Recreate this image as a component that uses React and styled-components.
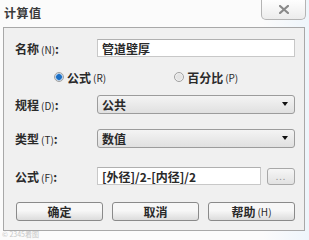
import React from 'react';
import styled, { createGlobalStyle } from 'styled-components';

const Global = createGlobalStyle`
    html, body {
        margin: 0;
        padding: 0;
        background: #fbfbfb;
    }
    body {
        width: 309px;
        height: 240px;
        overflow: hidden;
        font-family: "Noto Sans CJK SC", "DejaVu Sans", sans-serif;
        font-size: 12px;
        color: #1a1a1a;
    }
`;

const Window = styled.div`
    position: relative;
    width: 309px;
    height: 240px;
    background: linear-gradient(to right, #fbfbfb 85%, #eef5fb 100%);
`;

const TitleBar = styled.div`
    display: flex;
    justify-content: space-between;
    align-items: flex-start;
    height: 27px;
    padding-left: 4px;
`;

const Title = styled.div`
    margin-top: 4px;
    font-size: 12px;
    font-weight: 700;
    color: #3a3a3a;
    letter-spacing: 0.5px;
`;

const CloseBtn = styled.div`
    width: 43px;
    height: 20px;
    margin-right: 3px;
    margin-top: -1px;
    border: 1px solid #b4b4b4;
    border-top: none;
    border-radius: 0 0 5px 5px;
    background: linear-gradient(#ffffff, #ececec);
    display: flex;
    align-items: center;
    justify-content: center;
`;

const Panel = styled.div`
    margin-left: 3px;
    width: 302px;
    height: 204px;
    border: 1px solid #a8a8a8;
    background: #f0f0f0;
    box-sizing: border-box;
    padding: 10px 9px 0 11px;
    display: flex;
    flex-direction: column;
`;

const Row = styled.div`
    display: flex;
    align-items: center;
    height: 20px;
    margin-bottom: ${(p) => p.gap || 0}px;
`;

const Label = styled.div`
    width: 82px;
    font-size: 12px;
    font-weight: 700;
    color: #2a2a2a;
    white-space: nowrap;
`;

const Hot = styled.span`
    font-size: 10px;
    font-weight: 400;
    margin-left: 2px;
`;

const TextBox = styled.div`
    flex: 1;
    height: 18px;
    border: 1px solid #c8c8c8;
    border-top-color: #b0b0b0;
    background: #fff;
    box-sizing: border-box;
    padding-left: 4px;
    display: flex;
    align-items: center;
    font-weight: 700;
    color: #2a2a2a;
`;

const Select = styled.div`
    flex: 1;
    height: 19px;
    border: 1px solid #9c9c9c;
    border-radius: 3px;
    background: linear-gradient(#f4f4f4, #e0e0e0);
    box-sizing: border-box;
    padding: 0 6px 0 4px;
    display: flex;
    align-items: center;
    justify-content: space-between;
    font-weight: 700;
    color: #2a2a2a;
`;

const Arrow = styled.span`
    width: 0;
    height: 0;
    border-left: 3.5px solid transparent;
    border-right: 3.5px solid transparent;
    border-top: 4px solid #111;
`;

const RadioRow = styled.div`
    display: flex;
    align-items: center;
    height: 20px;
    margin-bottom: 7px;
`;

const RadioItem = styled.div`
    display: flex;
    align-items: center;
    margin-left: ${(p) => p.left}px;
    font-weight: 700;
    color: #2a2a2a;
`;

const Dot = styled.span`
    width: 10px;
    height: 10px;
    border-radius: 50%;
    border: 1px solid #a0a0a0;
    box-sizing: border-box;
    margin-right: 3px;
    background: ${(p) =>
        p.on
            ? 'radial-gradient(circle, #1c6fc4 0 2.5px, #7fb2e6 3px, #e8e8e8 4px)'
            : 'radial-gradient(circle, #e4e4e4 0 2.5px, #f4f4f4 4px)'};
`;

const SmallBtn = styled.div`
    width: 28px;
    height: 17px;
    margin-left: 6px;
    border: 1px solid #a8a8a8;
    border-radius: 3px;
    background: linear-gradient(#f6f6f6, #e2e2e2);
    box-sizing: border-box;
    display: flex;
    align-items: center;
    justify-content: center;
    font-size: 9px;
    color: #999;
    letter-spacing: 1px;
`;

const Buttons = styled.div`
    display: flex;
    gap: 9px;
    margin-top: 16px;
    padding-left: 1px;
`;

const Button = styled.div`
    width: 88px;
    height: 19px;
    border: 1px solid #8a8a8a;
    border-radius: 3px;
    background: linear-gradient(#f7f7f7 45%, #dcdcdc);
    box-sizing: border-box;
    display: flex;
    align-items: center;
    justify-content: center;
    font-weight: 700;
    color: #2a2a2a;
`;

const Watermark = styled.div`
    position: absolute;
    left: 2px;
    bottom: 1px;
    font-size: 7px;
    color: #c8c8c8;
`;

export default function App() {
    return (
        <Window>
            <Global />
            <TitleBar>
                <Title>计算值</Title>
                <CloseBtn>
                    <svg width="10" height="9" viewBox="0 0 10 9">
                        <path
                            d="M1 1 L9 8 M9 1 L1 8"
                            stroke="#8a8a8a"
                            strokeWidth="2.2"
                            strokeLinecap="square"
                        />
                    </svg>
                </CloseBtn>
            </TitleBar>
            <Panel>
                <Row gap={9}>
                    <Label>
                        名称<Hot>(N)</Hot>:
                    </Label>
                    <TextBox>管道壁厚</TextBox>
                </Row>
                <RadioRow>
                    <RadioItem left={39}>
                        <Dot on />
                        公式<Hot>(R)</Hot>
                    </RadioItem>
                    <RadioItem left={68}>
                        <Dot />
                        百分比<Hot>(P)</Hot>
                    </RadioItem>
                </RadioRow>
                <Row gap={14}>
                    <Label>
                        规程<Hot>(D)</Hot>:
                    </Label>
                    <Select>
                        公共
                        <Arrow />
                    </Select>
                </Row>
                <Row gap={18}>
                    <Label>
                        类型<Hot>(T)</Hot>:
                    </Label>
                    <Select>
                        数值
                        <Arrow />
                    </Select>
                </Row>
                <Row>
                    <Label>
                        公式<Hot>(F)</Hot>:
                    </Label>
                    <TextBox>[外径]/2-[内径]/2</TextBox>
                    <SmallBtn>...</SmallBtn>
                </Row>
                <Buttons>
                    <Button>确定</Button>
                    <Button>取消</Button>
                    <Button>
                        帮助<Hot>(H)</Hot>
                    </Button>
                </Buttons>
            </Panel>
            <Watermark>© 2345看图</Watermark>
        </Window>
    );
}
